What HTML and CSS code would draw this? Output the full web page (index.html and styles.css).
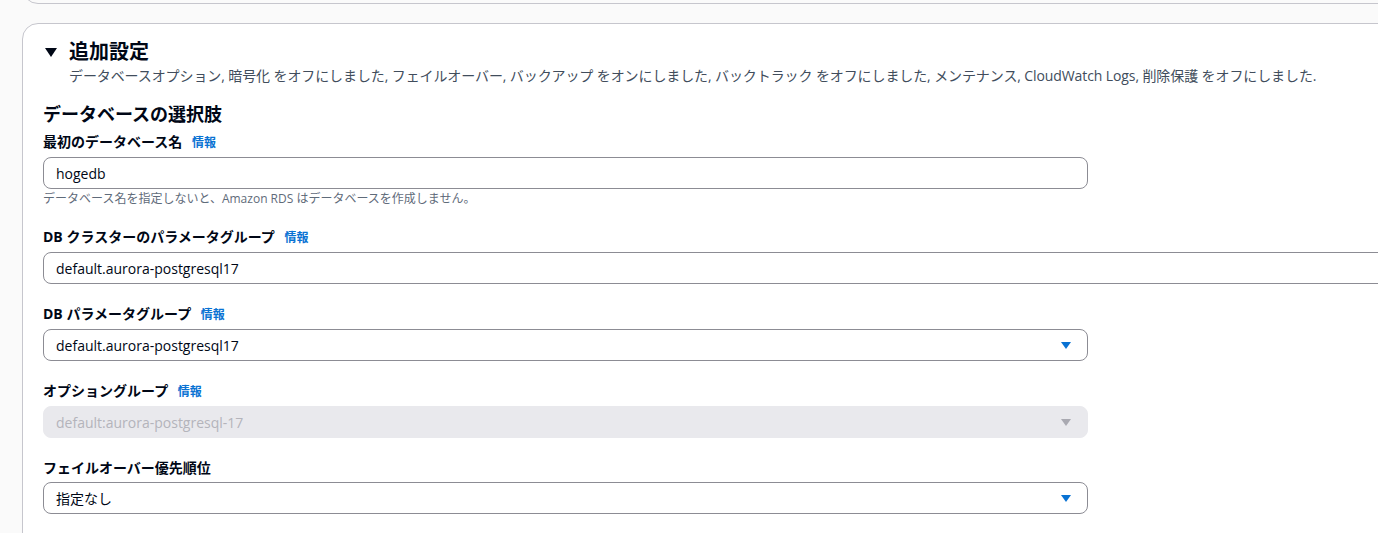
FILE: index.html
```html
<!DOCTYPE html>
<html lang="ja">
<head>
    <meta charset="UTF-8">
    <meta name="viewport" content="width=device-width, initial-scale=1.0">
    <title>追加設定</title>
    <link rel="stylesheet" href="styles.css">
</head>
<body>
    <div class="page">
        <div class="prev-card"></div>

        <div class="card">
            <div class="expander">
                <span class="caret">
                    <svg width="12" height="9" viewBox="0 0 12 9"><path d="M0 0 H12 L6 9 Z" fill="#000716"/></svg>
                </span>
                <h2>追加設定</h2>
            </div>
            <p class="summary">データベースオプション, 暗号化 をオフにしました, フェイルオーバー, バックアップ をオンにしました, バックトラック をオフにしました, メンテナンス, CloudWatch Logs, 削除保護 をオフにしました.</p>

            <h3>データベースの選択肢</h3>

            <div class="field">
                <label>最初のデータベース名 <a href="#" class="info">情報</a></label>
                <div class="control">
                    <input type="text" class="text-input" value="hogedb">
                </div>
                <p class="hint">データベース名を指定しないと、Amazon RDS はデータベースを作成しません。</p>
            </div>

            <div class="field">
                <label>DB クラスターのパラメータグループ <a href="#" class="info">情報</a></label>
                <div class="control wide">
                    <input type="text" class="text-input" value="default.aurora-postgresql17">
                </div>
            </div>

            <div class="field">
                <label>DB パラメータグループ <a href="#" class="info">情報</a></label>
                <div class="control select">
                    <span class="value">default.aurora-postgresql17</span>
                    <svg class="arrow" width="10" height="7" viewBox="0 0 10 7"><path d="M0 0 H10 L5 7 Z" fill="#0972d3"/></svg>
                </div>
            </div>

            <div class="field">
                <label>オプショングループ <a href="#" class="info">情報</a></label>
                <div class="control select disabled">
                    <span class="value">default:aurora-postgresql-17</span>
                    <svg class="arrow" width="10" height="7" viewBox="0 0 10 7"><path d="M0 0 H10 L5 7 Z" fill="#a9a9b1"/></svg>
                </div>
            </div>

            <div class="field">
                <label>フェイルオーバー優先順位</label>
                <div class="control select">
                    <span class="value">指定なし</span>
                    <svg class="arrow" width="10" height="7" viewBox="0 0 10 7"><path d="M0 0 H10 L5 7 Z" fill="#0972d3"/></svg>
                </div>
            </div>
        </div>
    </div>
</body>
</html>
```

FILE: styles.css
```css
html, body {
    margin: 0;
    background-color: #fafafa;
    overflow: hidden;
}
body {
    font-family: "Open Sans", "Noto Sans CJK JP", sans-serif;
    color: #000716;
    height: 533px;
}
.page {
    padding-left: 22px;
    width: 1420px;
}
.prev-card {
    height: 40px;
    margin-top: -38px;
    border: 1px solid #c6c6cd;
    border-radius: 16px;
    margin-bottom: 19px;
}
.card {
    background-color: #ffffff;
    border: 1px solid #c6c6cd;
    border-radius: 16px;
    padding: 16px 20px 40px;
}
.expander {
    display: flex;
    align-items: center;
    gap: 12px;
    padding-left: 2px;
}
.caret {
    display: flex;
    width: 12px;
}
.expander h2 {
    margin: 0;
    font-size: 20px;
    line-height: 24px;
    font-weight: 700;
}
.summary {
    margin: 2px 0 0 26px;
    font-size: 14px;
    line-height: 20px;
    color: #414d5c;
    letter-spacing: -0.1px;
}
h3 {
    margin: 17px 0 0;
    font-size: 18px;
    line-height: 22px;
    font-weight: 700;
}
.field {
    margin-top: 7px;
}
.field + .field {
    margin-top: 20px;
}
label {
    display: block;
    font-size: 14px;
    line-height: 20px;
    font-weight: 700;
    margin-bottom: 4px;
}
.info {
    margin-left: 6px;
    font-size: 12px;
    font-weight: 700;
    color: #0972d3;
    text-decoration: none;
}
.control {
    width: 1045px;
    box-sizing: border-box;
}
.control.wide {
    width: 100%;
}
.text-input {
    display: block;
    width: 100%;
    height: 32px;
    box-sizing: border-box;
    border: 1px solid #8c8c94;
    border-radius: 8px;
    padding: 0 12px;
    font-family: inherit;
    font-size: 14px;
    color: #000716;
    background: #ffffff;
}
.control.wide .text-input {
    border-radius: 8px 0 0 8px;
}
.select {
    display: flex;
    align-items: center;
    justify-content: space-between;
    height: 32px;
    border: 1px solid #8c8c94;
    border-radius: 8px;
    padding: 0 16px 0 12px;
    font-size: 14px;
}
.select.disabled {
    background-color: #e9e9ed;
    border-color: #e9e9ed;
    color: #b4b4bb;
}
.hint {
    margin: 2px 0 0;
    font-size: 12px;
    line-height: 16px;
    color: #5f6b7a;
}
```
